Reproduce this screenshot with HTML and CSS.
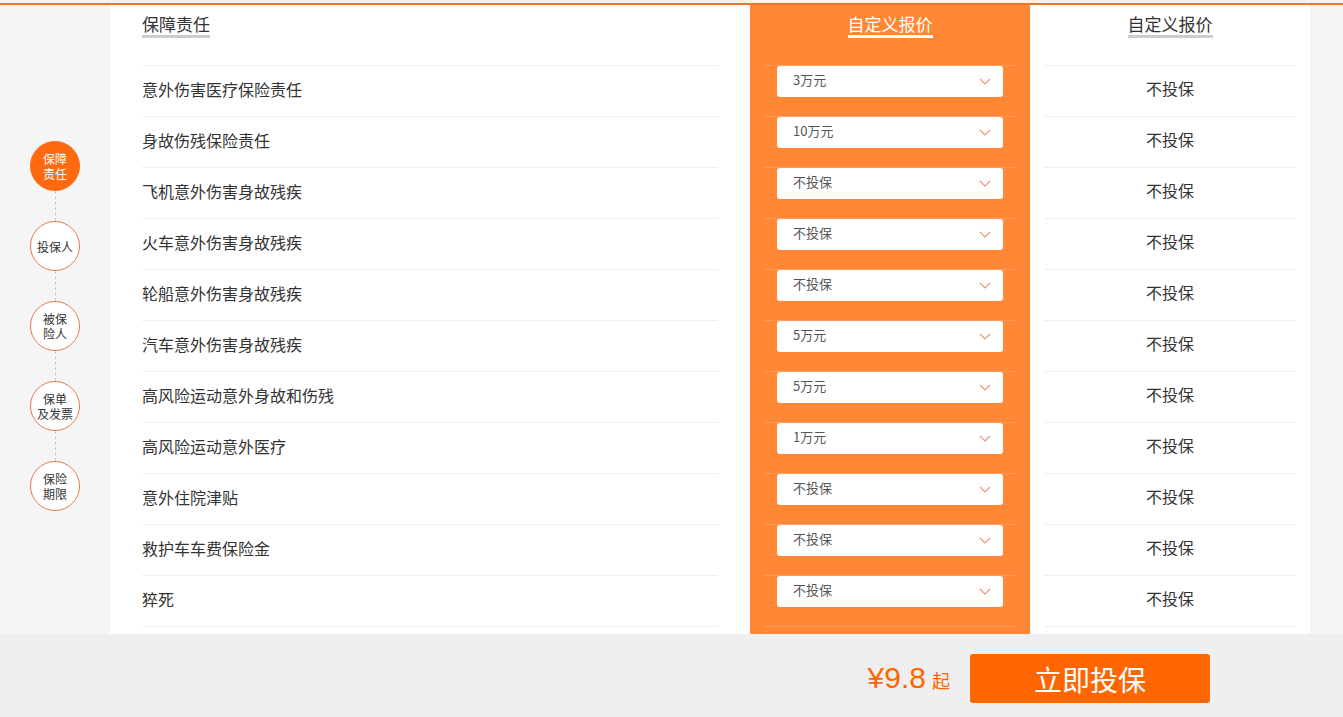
FILE: index.html
```html
<!DOCTYPE html>
<html lang="zh-CN">
<head>
    <meta charset="UTF-8">
    <meta name="viewport" content="width=device-width, initial-scale=1.0">
    <title>自定义报价 - 保障责任</title>
    <link rel="stylesheet" href="styles.css">
</head>
<body>
    <div class="topline"></div>
    <div class="page">
        <div class="steps">
            <div class="step active">保障<br>责任</div>
            <div class="step-link"></div>
            <div class="step">投保人</div>
            <div class="step-link"></div>
            <div class="step">被保<br>险人</div>
            <div class="step-link"></div>
            <div class="step">保单<br>及发票</div>
            <div class="step-link"></div>
            <div class="step">保险<br>期限</div>
        </div>

        <div class="panel">
            <div class="col col-name">
                <div class="col-head"><span>保障责任</span></div>
                <div class="row">意外伤害医疗保险责任</div>
                <div class="row">身故伤残保险责任</div>
                <div class="row">飞机意外伤害身故残疾</div>
                <div class="row">火车意外伤害身故残疾</div>
                <div class="row">轮船意外伤害身故残疾</div>
                <div class="row">汽车意外伤害身故残疾</div>
                <div class="row">高风险运动意外身故和伤残</div>
                <div class="row">高风险运动意外医疗</div>
                <div class="row">意外住院津贴</div>
                <div class="row">救护车车费保险金</div>
                <div class="row last">猝死</div>
            </div>

            <div class="col col-custom">
                <div class="col-head"><span>自定义报价</span></div>
                <div class="row"><div class="select"><span>3万元</span><svg width="12" height="7" viewBox="0 0 12 7"><polyline points="1,1 6,6 11,1" fill="none" stroke="#e8957a" stroke-width="1.2"/></svg></div></div>
                <div class="row"><div class="select"><span>10万元</span><svg width="12" height="7" viewBox="0 0 12 7"><polyline points="1,1 6,6 11,1" fill="none" stroke="#e8957a" stroke-width="1.2"/></svg></div></div>
                <div class="row"><div class="select"><span>不投保</span><svg width="12" height="7" viewBox="0 0 12 7"><polyline points="1,1 6,6 11,1" fill="none" stroke="#e8957a" stroke-width="1.2"/></svg></div></div>
                <div class="row"><div class="select"><span>不投保</span><svg width="12" height="7" viewBox="0 0 12 7"><polyline points="1,1 6,6 11,1" fill="none" stroke="#e8957a" stroke-width="1.2"/></svg></div></div>
                <div class="row"><div class="select"><span>不投保</span><svg width="12" height="7" viewBox="0 0 12 7"><polyline points="1,1 6,6 11,1" fill="none" stroke="#e8957a" stroke-width="1.2"/></svg></div></div>
                <div class="row"><div class="select"><span>5万元</span><svg width="12" height="7" viewBox="0 0 12 7"><polyline points="1,1 6,6 11,1" fill="none" stroke="#e8957a" stroke-width="1.2"/></svg></div></div>
                <div class="row"><div class="select"><span>5万元</span><svg width="12" height="7" viewBox="0 0 12 7"><polyline points="1,1 6,6 11,1" fill="none" stroke="#e8957a" stroke-width="1.2"/></svg></div></div>
                <div class="row"><div class="select"><span>1万元</span><svg width="12" height="7" viewBox="0 0 12 7"><polyline points="1,1 6,6 11,1" fill="none" stroke="#e8957a" stroke-width="1.2"/></svg></div></div>
                <div class="row"><div class="select"><span>不投保</span><svg width="12" height="7" viewBox="0 0 12 7"><polyline points="1,1 6,6 11,1" fill="none" stroke="#e8957a" stroke-width="1.2"/></svg></div></div>
                <div class="row"><div class="select"><span>不投保</span><svg width="12" height="7" viewBox="0 0 12 7"><polyline points="1,1 6,6 11,1" fill="none" stroke="#e8957a" stroke-width="1.2"/></svg></div></div>
                <div class="row last"><div class="select"><span>不投保</span><svg width="12" height="7" viewBox="0 0 12 7"><polyline points="1,1 6,6 11,1" fill="none" stroke="#e8957a" stroke-width="1.2"/></svg></div></div>
            </div>

            <div class="col col-plan">
                <div class="col-head"><span>自定义报价</span></div>
                <div class="row">不投保</div>
                <div class="row">不投保</div>
                <div class="row">不投保</div>
                <div class="row">不投保</div>
                <div class="row">不投保</div>
                <div class="row">不投保</div>
                <div class="row">不投保</div>
                <div class="row">不投保</div>
                <div class="row">不投保</div>
                <div class="row">不投保</div>
                <div class="row last">不投保</div>
            </div>
        </div>
    </div>

    <div class="footer">
        <div class="price">¥9.8<small>起</small></div>
        <button class="buy">立即投保</button>
    </div>
</body>
</html>
```

FILE: styles.css
```css
body {
    margin: 0;
    background-color: #f5f5f5;
    font-family: "Microsoft YaHei", "Noto Sans CJK SC", sans-serif;
    color: #333;
    height: 717px;
    overflow: hidden;
}
.topline {
    height: 3px;
    background-color: #fdf1e8;
    border-bottom: 2px solid #e8772e;
}
.page {
    display: flex;
    height: 629px;
    overflow: hidden;
}
.steps {
    width: 110px;
    display: flex;
    flex-direction: column;
    align-items: center;
    padding-top: 136px;
}
.step {
    width: 48px;
    height: 48px;
    border: 1px solid #e8784f;
    border-radius: 50%;
    background-color: #fff;
    display: flex;
    align-items: center;
    justify-content: center;
    text-align: center;
    font-size: 12px;
    line-height: 15px;
    color: #333;
}
.step.active {
    background-color: #ff6a10;
    border-color: #ff6a10;
    color: #fff;
}
.step-link {
    height: 30px;
    border-left: 1px dashed #c8c8c8;
}
.panel {
    width: 1200px;
    background-color: #fff;
    display: flex;
    padding-left: 32px;
    box-sizing: border-box;
}
.col-head {
    height: 60px;
    box-sizing: border-box;
    padding-top: 8px;
    font-size: 17px;
    line-height: 21px;
}
.col-head span {
    display: inline-block;
    padding-bottom: 1px;
    border-bottom: 3px solid #ccc;
}
.row {
    height: 50px;
    border-top: 1px solid #eee;
    font-size: 16px;
}
.row.last {
    border-bottom: 1px solid #eee;
}
.col-name {
    width: 576px;
    margin-right: 32px;
}
.col-name .row {
    line-height: 47px;
}
.col-custom {
    width: 280px;
    padding: 0 14px;
    box-sizing: border-box;
    background-color: #ff8736;
}
.col-custom .col-head {
    text-align: center;
    color: #fff;
}
.col-custom .col-head span {
    border-bottom-color: #fff;
}
.col-custom .row {
    border-color: #ff9d5e;
    padding: 0 13px;
}
.select {
    height: 31px;
    background-color: #fff;
    border-radius: 3px;
    display: flex;
    align-items: center;
    justify-content: space-between;
    padding: 0 12px 0 16px;
    font-size: 13px;
    color: #555;
}
.select span {
    margin-top: -4px;
}
.col-plan {
    width: 280px;
    padding: 0 14px;
    box-sizing: border-box;
    text-align: center;
}
.col-plan .row {
    line-height: 45px;
}
.footer {
    height: 83px;
    background-color: #efefef;
    display: flex;
    justify-content: flex-end;
    align-items: center;
    padding-right: 133px;
}
.price {
    font-family: "Liberation Sans", Arial, sans-serif;
    font-size: 30px;
    color: #ff6600;
    margin-right: 20px;
    padding-top: 4px;
}
.price small {
    font-family: "Microsoft YaHei", "Noto Sans CJK SC", sans-serif;
    font-size: 18px;
    margin-left: 6px;
}
.buy {
    width: 240px;
    height: 49px;
    margin-top: 6px;
    background-color: #ff6600;
    color: #fff;
    border: none;
    border-radius: 3px;
    font-family: "Microsoft YaHei", "Noto Sans CJK SC", sans-serif;
    font-size: 28px;
    cursor: pointer;
}
```
